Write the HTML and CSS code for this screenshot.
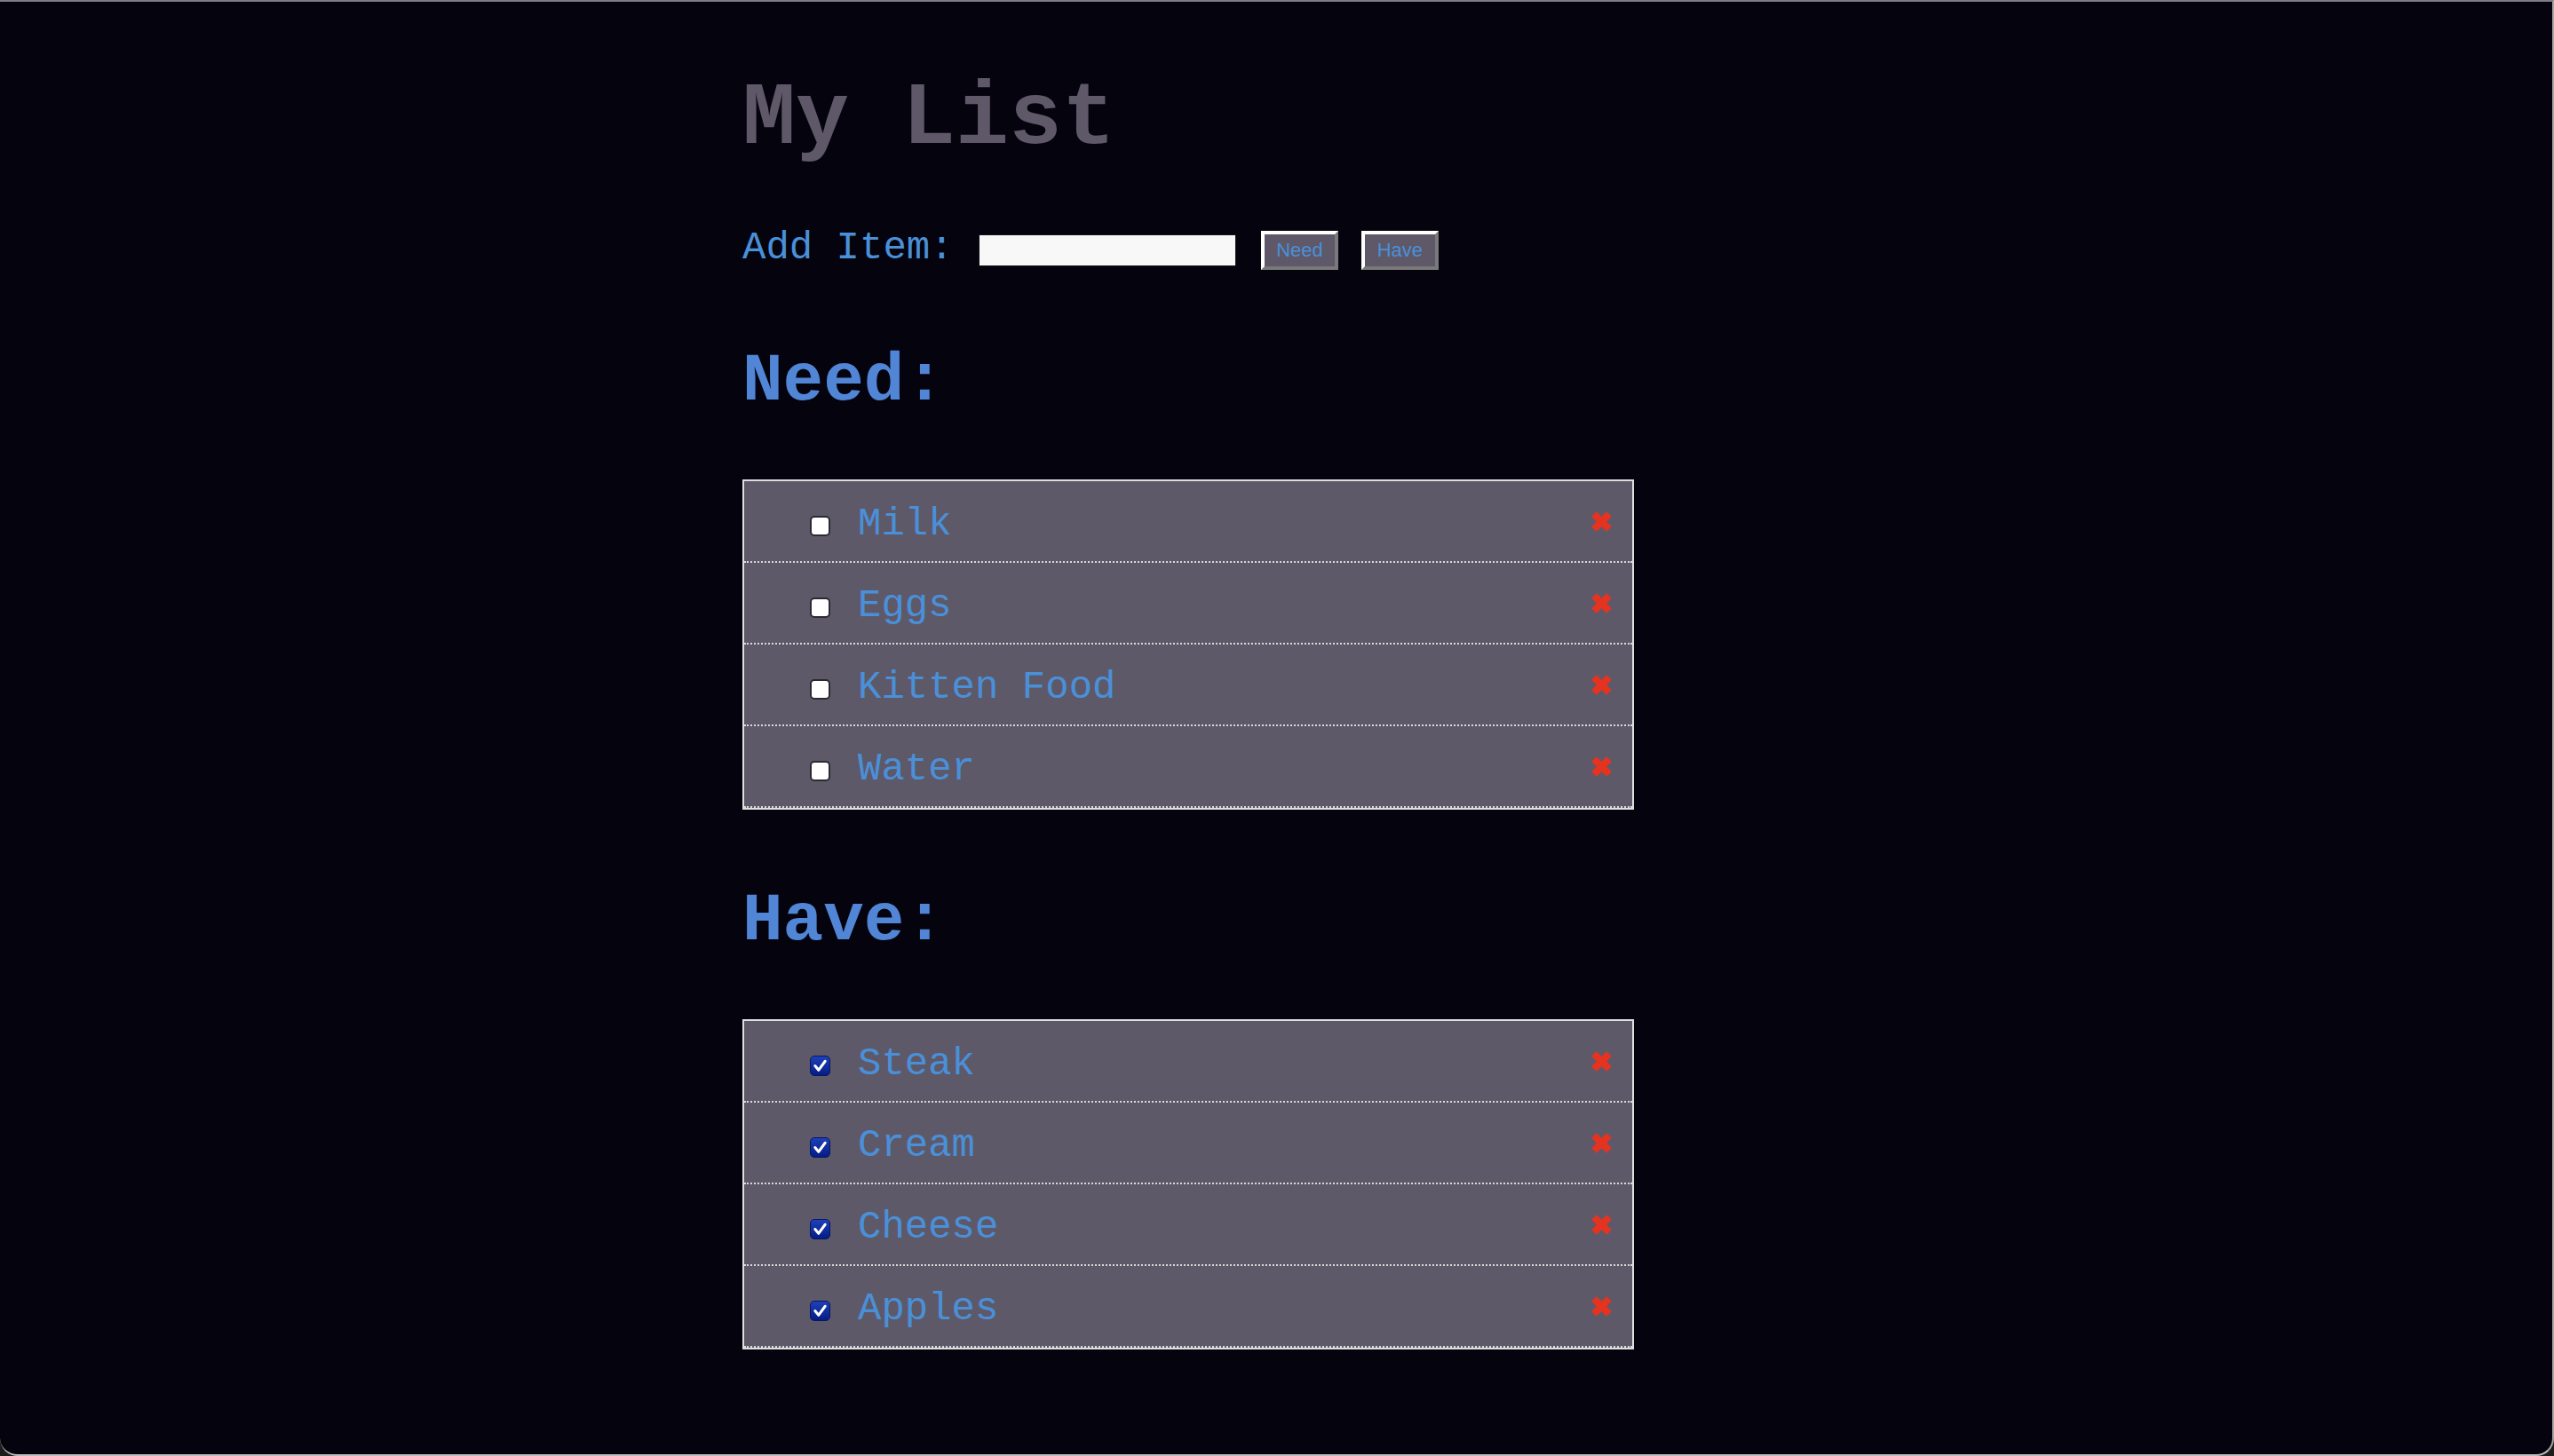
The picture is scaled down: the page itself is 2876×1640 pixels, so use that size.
FILE: index.html
```html
<!DOCTYPE html>
<html lang="en">
<head>
<meta charset="utf-8">
<title>My List</title>
<link rel="stylesheet" href="styles.css">
</head>
<body>
<div class="window">
  <main class="page">
    <h1 class="title">My List</h1>

    <div class="add-row">
      <label class="add-label" for="new-item">Add Item:</label>
      <input id="new-item" class="add-input" type="text">
      <button class="btn" type="button">Need</button>
      <button class="btn" type="button">Have</button>
    </div>

    <h2 class="section-title">Need:</h2>
    <ul class="list">
      <li class="item"><span class="check"></span><span class="item-name">Milk</span><svg class="remove" viewBox="0 0 23 23"><path d="M3 3L20 20M20 3L3 20"/></svg></li>
      <li class="item"><span class="check"></span><span class="item-name">Eggs</span><svg class="remove" viewBox="0 0 23 23"><path d="M3 3L20 20M20 3L3 20"/></svg></li>
      <li class="item"><span class="check"></span><span class="item-name">Kitten Food</span><svg class="remove" viewBox="0 0 23 23"><path d="M3 3L20 20M20 3L3 20"/></svg></li>
      <li class="item"><span class="check"></span><span class="item-name">Water</span><svg class="remove" viewBox="0 0 23 23"><path d="M3 3L20 20M20 3L3 20"/></svg></li>
    </ul>

    <h2 class="section-title">Have:</h2>
    <ul class="list">
      <li class="item"><span class="check is-checked"><svg viewBox="0 0 24 24"><polyline points="5.5,12 10,17.5 18.5,6"/></svg></span><span class="item-name">Steak</span><svg class="remove" viewBox="0 0 23 23"><path d="M3 3L20 20M20 3L3 20"/></svg></li>
      <li class="item"><span class="check is-checked"><svg viewBox="0 0 24 24"><polyline points="5.5,12 10,17.5 18.5,6"/></svg></span><span class="item-name">Cream</span><svg class="remove" viewBox="0 0 23 23"><path d="M3 3L20 20M20 3L3 20"/></svg></li>
      <li class="item"><span class="check is-checked"><svg viewBox="0 0 24 24"><polyline points="5.5,12 10,17.5 18.5,6"/></svg></span><span class="item-name">Cheese</span><svg class="remove" viewBox="0 0 23 23"><path d="M3 3L20 20M20 3L3 20"/></svg></li>
      <li class="item"><span class="check is-checked"><svg viewBox="0 0 24 24"><polyline points="5.5,12 10,17.5 18.5,6"/></svg></span><span class="item-name">Apples</span><svg class="remove" viewBox="0 0 23 23"><path d="M3 3L20 20M20 3L3 20"/></svg></li>
    </ul>
  </main>
</div>
</body>
</html>
```

FILE: styles.css
```css
html, body {
  margin: 0;
  padding: 0;
}

body {
  background: #1b1d1b;
}

.window {
  box-sizing: border-box;
  height: 1640px;
  background: #05040e;
  border-top: 2px solid #7f7e84;
  border-right: 2px solid #a6a6a6;
  border-bottom: 2px solid #bdbdbd;
  border-left: 0;
  border-radius: 0 0 20px 20px;
  overflow: hidden;
}

.page {
  width: 1202px;
  margin: 0 auto;
  padding-top: 83px;
  font-family: "Liberation Mono", "Courier New", monospace;
}

.title {
  margin: 0 0 75px;
  font-size: 100px;
  line-height: 100px;
  font-weight: bold;
  color: #5e5868;
}

.add-row {
  display: flex;
  align-items: center;
  height: 44px;
}

.add-label {
  font-size: 44px;
  line-height: 38px;
  padding-bottom: 6px;
  color: #4a90d9;
}

.add-input {
  box-sizing: border-box;
  width: 290px;
  height: 36px;
  margin: 0 0 0 28px;
  padding: 0;
  border: 1px solid #151515;
  background: #f8f8f8;
}

.btn {
  box-sizing: border-box;
  height: 44px;
  margin: 0 0 0 28px;
  padding: 0 13.5px;
  border: 4px solid;
  border-color: #ffffff #7a7a7a #7a7a7a #ffffff;
  background: #5e5868;
  color: #4a90d9;
  font-family: "Liberation Sans", Arial, sans-serif;
  font-size: 22px;
  line-height: 36px;
}

.btn + .btn {
  margin-left: 26px;
}

.section-title {
  margin: 88px 0 72px;
  font-size: 76px;
  line-height: 76px;
  font-weight: bold;
  color: #5185d6;
}

.list {
  list-style: none;
  margin: 0;
  padding: 0;
  width: 1000px;
  border: 2px solid #dedede;
  background: #5e5969;
}

.item {
  display: flex;
  align-items: center;
  height: 90px;
  padding: 0 23px 0 74px;
  border-bottom: 2px dotted #d9d9d9;
}

.check {
  box-sizing: border-box;
  flex: none;
  width: 23px;
  height: 23px;
  margin-top: 11px;
  border: 2px solid #2b2a30;
  border-radius: 5px;
  background: #ffffff;
}

.check.is-checked {
  border: 1px solid #061660;
  background: linear-gradient(#1e40b8, #061c86);
}

.check svg {
  display: block;
  width: 100%;
  height: 100%;
  fill: none;
  stroke: #ffffff;
  stroke-width: 3.4;
  stroke-linecap: round;
  stroke-linejoin: round;
}

.item-name {
  margin: 6px 0 0 31px;
  font-size: 44px;
  line-height: 44px;
  color: #4a90d9;
}

.remove {
  display: block;
  flex: none;
  width: 23px;
  height: 23px;
  margin-left: auto;
  fill: none;
  stroke: #e6331f;
  stroke-width: 8;
  stroke-linecap: butt;
}
```
